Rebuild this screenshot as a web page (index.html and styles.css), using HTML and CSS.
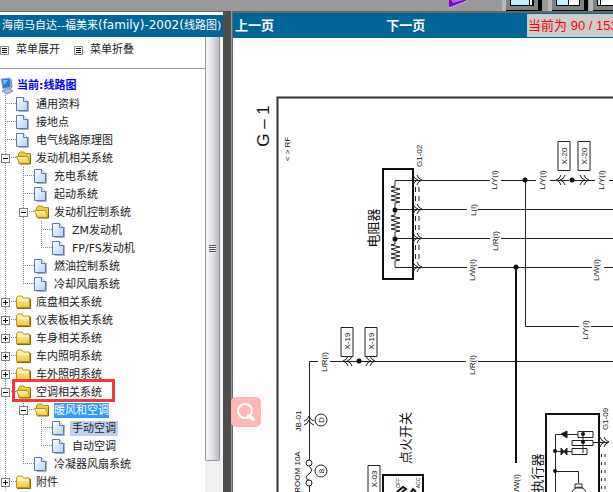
FILE: index.html
```html
<!DOCTYPE html>
<html lang="zh-CN">
<head>
    <meta charset="UTF-8">
    <meta name="viewport" content="width=device-width, initial-scale=1.0">
    <title>海南马自达--福美来(family)-2002(线路图)</title>
    <link rel="stylesheet" href="styles.css">
</head>
<body>
    <!-- shared icons -->
    <svg class="sprite" aria-hidden="true">
        <defs>
            <linearGradient id="paper" x1="0" y1="0" x2="1" y2="1">
                <stop offset="0" stop-color="#ffffff"/>
                <stop offset="1" stop-color="#b4d0fa"/>
            </linearGradient>
            <linearGradient id="gold" x1="0" y1="0" x2="0" y2="1">
                <stop offset="0" stop-color="#fff8b0"/>
                <stop offset="1" stop-color="#f0c840"/>
            </linearGradient>
        </defs>
        <symbol id="doc" viewBox="0 0 18 18">
            <path d="M3 3.500V16.500H12.500V6" fill="none" stroke="#b0b0b8"/>
            <path d="M.5 2.500H7.500L11.500 6.500V15.500H.5Z" fill="url(#paper)" stroke="#5878b8"/>
            <path d="M7.500 2.500V6.500H11.500" fill="#e8f0ff" stroke="#5878b8"/>
        </symbol>
        <symbol id="folder" viewBox="0 0 18 18">
            <path d="M.5 14.500V4.500L2 3H6L7.500 5H13.500V14.500Z" fill="url(#gold)" stroke="#b8941c"/>
            <path d="M1.500 7H13" stroke="#fffbd8"/>
            <path d="M1 15.500H14.500V6" fill="none" stroke="#806810"/>
        </symbol>
        <symbol id="folder-open" viewBox="0 0 18 18">
            <path d="M2.500 14V4.500L4 3H8L9.500 4.500H14.500V14Z" fill="#f0c840" stroke="#b8941c"/>
            <path d="M.5 7.500H11.500L14 14.500H3.500Z" fill="url(#gold)" stroke="#b8941c"/>
            <path d="M3.500 15H14.500V6" fill="none" stroke="#806810"/>
        </symbol>
        <symbol id="lines" viewBox="0 0 9 9">
            <path d="M.5.500H8.500V8.500H.5Z" fill="#fff" stroke="#888"/>
            <path d="M2 2.500H7M2 4.500H7M2 6.500H7" stroke="#000"/>
        </symbol>
    </svg>

    <header class="toolbar">
        <button class="tool play" aria-label="播放">
            <svg width="20" height="11"><path d="M1 0V7.500L18 1V0Z" fill="#7a08c4"/><path d="M3 0H16L5 3Z" fill="#b468f0"/><path d="M1 8L19 1" stroke="#eee" stroke-dasharray="1 1"/></svg>
        </button>
        <button class="tool" aria-label="宽左栏">
            <svg width="41" height="11"><path d="M0 0H4V11H0Z" fill="#b8b8b8"/><path d="M4 0H40V11H4Z" fill="#000"/><path d="M4 0H36V10H4Z" fill="#808080"/><path d="M8 0H32V6H8Z" fill="#000"/><path d="M9 0H27V5H9Z" fill="#c0f0ff"/><path d="M28 0H30V5H28Z" fill="#fff"/></svg>
        </button>
        <button class="tool" aria-label="平分">
            <svg width="41" height="11"><path d="M0 0H4V11H0Z" fill="#b8b8b8"/><path d="M4 0H40V11H4Z" fill="#000"/><path d="M4 0H36V10H4Z" fill="#808080"/><path d="M8 0H32V6H8Z" fill="#000"/><path d="M9 0H20V5H9Z" fill="#c0f0ff"/><path d="M21 0H31V5H21Z" fill="#fff"/></svg>
        </button>
        <button class="tool last" aria-label="窄左栏">
            <svg width="24" height="11"><path d="M0 0H4V11H0Z" fill="#b8b8b8"/><path d="M4 0H24V11H4Z" fill="#000"/><path d="M4 0H24V10H4Z" fill="#808080"/><path d="M8 0H24V6H8Z" fill="#000"/><path d="M9 0H11V5H9Z" fill="#c0f0ff"/><path d="M12 0H24V5H12Z" fill="#fff"/></svg>
        </button>
    </header>

    <main class="frames">
        <aside class="sidebar">
            <h1>海南马自达--福美来<span>(family)-2002(</span>线路图)</h1>
            <div class="sidebar-body">
                <nav class="menu">
                    <div class="menu-actions">
                        <button><svg width="9" height="9"><use href="#lines"/></svg>菜单展开</button>
                        <button><svg width="9" height="9"><use href="#lines"/></svg>菜单折叠</button>
                    </div>
                    <a class="root" href="#">
                        <svg width="14" height="18" viewBox="0 0 14 18"><path d="M2 14L9 11L13 14L7 17Z" fill="#b8bcd0" stroke="#8088a8"/><path d="M1 2L10 1L11 10L3 12Z" fill="#2478e0" stroke="#a0b0d0"/><path d="M3 3L8 3L4 8Z" fill="#78c8ff"/><path d="M11 2L12 10L10 12" fill="none" stroke="#7080a8"/></svg>当前:线路图
                    </a>
                    <ul class="tree">
                        <li><div class="row"><span class="joint"></span><svg class="icon"><use href="#doc"/></svg><a href="#">通用资料</a></div></li>
                        <li><div class="row"><span class="joint"></span><svg class="icon"><use href="#doc"/></svg><a href="#">接地点</a></div></li>
                        <li><div class="row"><span class="joint"></span><svg class="icon"><use href="#doc"/></svg><a href="#">电气线路原理图</a></div></li>
                        <li>
                            <div class="row"><span class="joint"><button class="toggle open" aria-label="折叠"></button></span><svg class="icon"><use href="#folder-open"/></svg><a href="#">发动机相关系统</a></div>
                            <ul>
                                <li><div class="row"><span class="joint"></span><svg class="icon"><use href="#doc"/></svg><a href="#">充电系统</a></div></li>
                                <li><div class="row"><span class="joint"></span><svg class="icon"><use href="#doc"/></svg><a href="#">起动系统</a></div></li>
                                <li>
                                    <div class="row"><span class="joint"><button class="toggle open" aria-label="折叠"></button></span><svg class="icon"><use href="#folder-open"/></svg><a href="#">发动机控制系统</a></div>
                                    <ul>
                                        <li><div class="row"><span class="joint"></span><svg class="icon"><use href="#doc"/></svg><a href="#">ZM发动机</a></div></li>
                                        <li><div class="row"><span class="joint"></span><svg class="icon"><use href="#doc"/></svg><a href="#">FP/FS发动机</a></div></li>
                                    </ul>
                                </li>
                                <li><div class="row"><span class="joint"></span><svg class="icon"><use href="#doc"/></svg><a href="#">燃油控制系统</a></div></li>
                                <li><div class="row"><span class="joint"></span><svg class="icon"><use href="#doc"/></svg><a href="#">冷却风扇系统</a></div></li>
                            </ul>
                        </li>
                        <li><div class="row"><span class="joint"><button class="toggle" aria-label="展开"></button></span><svg class="icon"><use href="#folder"/></svg><a href="#">底盘相关系统</a></div></li>
                        <li><div class="row"><span class="joint"><button class="toggle" aria-label="展开"></button></span><svg class="icon"><use href="#folder"/></svg><a href="#">仪表板相关系统</a></div></li>
                        <li><div class="row"><span class="joint"><button class="toggle" aria-label="展开"></button></span><svg class="icon"><use href="#folder"/></svg><a href="#">车身相关系统</a></div></li>
                        <li><div class="row"><span class="joint"><button class="toggle" aria-label="展开"></button></span><svg class="icon"><use href="#folder"/></svg><a href="#">车内照明系统</a></div></li>
                        <li><div class="row"><span class="joint"><button class="toggle" aria-label="展开"></button></span><svg class="icon"><use href="#folder"/></svg><a href="#">车外照明系统</a></div></li>
                        <li>
                            <div class="row marked"><span class="joint"><button class="toggle open" aria-label="折叠"></button></span><svg class="icon"><use href="#folder-open"/></svg><a href="#">空调相关系统</a></div>
                            <ul>
                                <li>
                                    <div class="row"><span class="joint"><button class="toggle open" aria-label="折叠"></button></span><svg class="icon"><use href="#folder-open"/></svg><a class="selected" href="#">暖风和空调</a></div>
                                    <ul>
                                        <li><div class="row"><span class="joint"></span><svg class="icon"><use href="#doc"/></svg><a class="current" href="#">手动空调</a></div></li>
                                        <li><div class="row"><span class="joint"></span><svg class="icon"><use href="#doc"/></svg><a href="#">自动空调</a></div></li>
                                    </ul>
                                </li>
                                <li><div class="row"><span class="joint"></span><svg class="icon"><use href="#doc"/></svg><a href="#">冷凝器风扇系统</a></div></li>
                            </ul>
                        </li>
                        <li class="more"><div class="row"><span class="joint"><button class="toggle" aria-label="展开"></button></span><svg class="icon"><use href="#folder"/></svg><a href="#">附件</a></div></li>
                    </ul>
                </nav>
                <div class="scrollbar"><div class="thumb"><span class="grip"></span></div></div>
            </div>
        </aside>

        <div class="splitter"></div>

        <section class="viewer">
            <div class="pager">
                <a href="#">上一页</a>
                <a href="#">下一页</a>
                <span class="status">当前为 90 / 153</span>
            </div>
            <div class="sheet">
                <svg class="diagram" width="380" height="454" viewBox="233 38 380 454">
                    <defs>
                        <path id="right" d="M-4-5Q-3-1 1 0Q-3 1-4 5M0-5Q1-1 5 0Q1 1 0 5"/>
                        <path id="zigzag" d="M0-14V-9L-4-8L5-6L-4-4L5-1L-4 1L5 3L-4 5L5 7L0 8V14"/>
                    </defs>

                    <!-- wires -->
                    <g class="wire">
                        <path d="M277.500 492V97.500H613" class="frame"/>
                        <path d="M395 180.500H490M501 180.500H536M550 180.500H569M572 180.500H595M609 180.500H613"/>
                        <path d="M395 209.500H467M478 209.500H613"/>
                        <path d="M395 238.500H490M501 238.500H613"/>
                        <path d="M395 267.500H467M478 267.500H592M604 267.500H613"/>
                        <path d="M525.500 180V326.500H579M591 326.500H613"/>
                        <path d="M309.500 460V361.500H318M330 361.500H466M478 361.500H613"/>
                        <path d="M516 267V463" class="bold"/>
                    </g>

                    <!-- resistor block -->
                    <g class="wire">
                        <path d="M383 169H413V279H383Z" class="bold"/>
                        <use href="#zigzag" x="395" y="195"/>
                        <use href="#zigzag" x="395" y="224"/>
                        <use href="#zigzag" x="395" y="253"/>
                        <use href="#right" x="417" y="180"/>
                        <use href="#right" x="417" y="209"/>
                        <use href="#right" x="417" y="238"/>
                        <use href="#right" x="417" y="267"/>
                        <path d="M415.500 187V263M419 187V263" stroke-dasharray="5 4 5 15"/>
                    </g>

                    <!-- connectors -->
                    <g class="wire">
                        <path d="M558 141.500H570V170.500H558ZM578 141.500H590V170.500H578Z"/>
                        <path d="M341 327.500H353V356.500H341ZM365 327.500H377V356.500H365Z"/>
                        <use href="#right" transform="translate(561 180) scale(-1 1)"/>
                        <use href="#right" x="584" y="180"/>
                        <use href="#right" transform="translate(348 361) scale(-1 1)"/>
                        <use href="#right" x="370" y="361"/>
                        <use href="#right" transform="translate(309 421) rotate(-90)"/>
                        <circle cx="321" cy="420" r="6"/>
                        <circle cx="321" cy="471" r="6"/>
                        <circle cx="309" cy="463" r="3"/>
                        <circle cx="309" cy="483" r="3"/>
                        <path d="M309 466Q314 470 309 474Q303 478 309 480M309.500 486V492"/>
                    </g>

                    <!-- ignition switch -->
                    <g class="wire">
                        <path d="M368 492V465.500H380V492"/>
                        <path d="M383 492V475H423V492" class="bold"/>
                        <path d="M397 492L403 487L406 489L402 492M411 492L413 489L416 492" class="bold"/>
                    </g>

                    <!-- actuator -->
                    <g class="wire">
                        <path d="M546 492V414H599V492" class="bold"/>
                        <path d="M578 434.500H555.500V492M572 451.500H555M555 471.500H578.500V483"/>
                        <path d="M578 431.500H593V437.500H578ZM572 440.500H593V445.500H572ZM572 448.500H587V454.500H572ZM593 442.500H608M583 433V453"/>
                        <path d="M561 434L567 431V438ZM561 448V455L567 448V455Z" fill="#111"/>
                        <path d="M575 484H582V488H575Z"/>
                        <circle cx="579" cy="494" r="7"/>
                        <use href="#right" x="604" y="442"/>
                        <path d="M601.500 454V492M605 454V492" stroke-dasharray="3 5"/>
                    </g>

                    <g class="node">
                        <circle cx="395" cy="210" r="2.500"/>
                        <circle cx="395" cy="239" r="2.500"/>
                        <circle cx="525" cy="180" r="2.500"/>
                        <circle cx="516" cy="267" r="2.500"/>
                        <circle cx="572" cy="180" r="2.500"/>
                        <circle cx="359" cy="361" r="2.500"/>
                        <circle cx="555" cy="451" r="2"/>
                        <circle cx="555" cy="471" r="2"/>
                        <circle cx="583" cy="434" r="2"/>
                        <circle cx="583" cy="442" r="2"/>
                    </g>

                    <g class="label">
                        <text class="sheet-no" transform="translate(269 126) rotate(-90)">G – 1</text>
                        <text transform="translate(290 149) rotate(-90)">&lt; &gt; RF</text>
                        <text transform="translate(422 156) rotate(-90)">G1-02</text>
                        <text transform="translate(497 180) rotate(-90)">L/Y(I)</text>
                        <text transform="translate(545 180) rotate(-90)">L/Y(I)</text>
                        <text transform="translate(604 180) rotate(-90)">L/Y(I)</text>
                        <text transform="translate(476 210) rotate(-90)">L(I)</text>
                        <text transform="translate(498 241) rotate(-90)">L/R(I)</text>
                        <text transform="translate(475 270) rotate(-90)">L/W(I)</text>
                        <text transform="translate(599 270) rotate(-90)">L/W(I)</text>
                        <text transform="translate(588 330) rotate(-90)">L/Y(I)</text>
                        <text transform="translate(327 362) rotate(-90)">L/R(I)</text>
                        <text transform="translate(475 365) rotate(-90)">L/R(I)</text>
                        <text transform="translate(567 156) rotate(-90)">X-20</text>
                        <text transform="translate(587 156) rotate(-90)">X-20</text>
                        <text transform="translate(350 341) rotate(-90)">X-19</text>
                        <text transform="translate(374 341) rotate(-90)">X-19</text>
                        <text transform="translate(301 421) rotate(-90)">JB-01</text>
                        <text transform="translate(324 420) rotate(-90)">D</text>
                        <text transform="translate(324 471) rotate(-90)">8</text>
                        <text transform="translate(300 472) rotate(-90)">ROOM 10A</text>
                        <text transform="translate(377 479) rotate(-90)">X-03</text>
                        <text transform="translate(608 419) rotate(-90)">G1-09</text>
                        <text transform="translate(519 485) rotate(-90)">L/W(I)</text>
                        <text class="tiny" transform="translate(400 483) rotate(-90)">OFF</text>
                        <text class="tiny" transform="translate(420 483) rotate(-90)">ACC</text>
                        <text class="part" transform="translate(378 228) rotate(-90)">电阻器</text>
                        <text class="part" transform="translate(410 438) rotate(-90)">点火开关</text>
                        <text class="part" transform="translate(542 473) rotate(-90)">执行器</text>
                    </g>
                </svg>
            </div>
            <button class="zoom" aria-label="放大">
                <svg width="20" height="20" viewBox="0 0 20 20"><circle cx="9" cy="9" r="7" fill="none" stroke="#fff" stroke-width="2"/><path d="M13 14L17 17" stroke="#fff" stroke-width="4" stroke-linecap="round"/></svg>
            </button>
        </section>
    </main>
</body>
</html>
```
FILE: styles.css
```css
*, *::after { box-sizing: border-box; margin: 0; padding: 0; }

body {
    display: flex;
    flex-direction: column;
    height: 100vh;
    overflow: hidden;
    background: #999;
    color: #222;
    font: 11px/18px "DejaVu Sans", "Noto Sans CJK SC", sans-serif;
}

a { color: inherit; text-decoration: none; }
button { border: none; background: none; color: inherit; font: inherit; cursor: pointer; }
svg { display: block; flex: none; }

.sprite { position: absolute; width: 0; height: 0; }

/* top toolbar */
.toolbar {
    display: flex;
    flex: none;
    justify-content: flex-end;
    height: 11px;
    gap: 5px;
}

.tool { height: 11px; }
.play { margin-right: 29px; }
.last { margin-left: -5px; }

.frames {
    display: flex;
    flex: 1;
    min-height: 0;
}

/* left frame */
.sidebar {
    display: flex;
    flex-direction: column;
    flex: none;
    width: 223px;
    padding-top: 3px;
    border-top: 1px solid #666;
    background: #fff;
}

.sidebar h1 {
    flex: none;
    height: 22px;
    padding-left: 2px;
    overflow: hidden;
    background: #069;
    color: #fff;
    font-size: 11px;
    font-weight: normal;
    line-height: 20px;
    white-space: nowrap;
}

.sidebar h1 span { font-size: 12px; }

.sidebar-body {
    display: flex;
    flex: 1;
    min-height: 0;
}

.menu {
    flex: 1;
    overflow: hidden;
}

.menu-actions {
    display: flex;
    gap: 14px;
    height: 32px;
    margin-bottom: 8px;
    padding-top: 4px;
    border-bottom: 1px solid #999;
}

.menu-actions button {
    display: flex;
    align-items: center;
    gap: 7px;
    height: 18px;
}

.root {
    display: flex;
    align-items: center;
    gap: 3px;
    height: 18px;
    color: #00f;
    font-weight: bold;
}

/* tree */
.tree ul { margin-left: 18px; }

.tree li {
    list-style: none;
    background: repeating-linear-gradient(#888 0 1px, transparent 1px 2px) 5px 0 / 1px 100% no-repeat;
}

.tree li:last-child { background-size: 1px 9px; }
.tree li.more { background-size: 1px 100%; }

.row {
    position: relative;
    display: flex;
    align-items: center;
    height: 18px;
}

.joint {
    display: flex;
    align-items: center;
    width: 16px;
    height: 18px;
    padding-left: 1px;
    background: repeating-linear-gradient(90deg, #888 0 1px, transparent 1px 2px) 5px 8px / 11px 1px no-repeat;
}

.icon {
    width: 18px;
    height: 18px;
    margin-right: 2px;
}

.row a { line-height: 15px; }

.toggle {
    width: 9px;
    height: 9px;
    border: 1px solid #808080;
    background:
        linear-gradient(#000, #000) center / 5px 1px no-repeat,
        linear-gradient(#000, #000) center / 1px 5px no-repeat,
        #fff;
}

.toggle.open { background: linear-gradient(#000, #000) center / 5px 1px no-repeat, #fff; }

.row .selected { background: #39f; color: #fff; }

.row .current {
    margin-left: -2px;
    padding: 0 2px;
    background: #c1d2ee;
}

.marked::after {
    content: "";
    position: absolute;
    top: -4px;
    left: 12px;
    z-index: 1;
    width: 103px;
    height: 23px;
    border: 3px solid #f83838;
    pointer-events: none;
}

.scrollbar {
    flex: none;
    width: 18px;
    padding-bottom: 31px;
    background: #f0f0f0;
}

.thumb {
    display: flex;
    align-items: center;
    justify-content: center;
    width: 15px;
    height: 100%;
    border: 1px solid #999;
    border-top: none;
    border-radius: 0 0 2px 2px;
    background: linear-gradient(90deg, #f6f6f6, #e4e4e8 45%, #b8b8c0);
}

.grip {
    width: 7px;
    height: 8px;
    background: repeating-linear-gradient(#555 0 1px, #eee 1px 2px);
}

.splitter {
    flex: none;
    width: 8px;
    background: #4d4d4d;
}

/* right frame */
.viewer {
    position: relative;
    display: flex;
    flex: 1;
    flex-direction: column;
    min-width: 0;
    margin-left: 1px;
    border-top: 2px solid #666;
    border-left: 1px solid #666;
    background: #fff;
}

.pager {
    display: grid;
    flex: none;
    grid-template-columns: 40% 37% minmax(0, 1fr);
    height: 25px;
    padding: 1px 0 1px 2px;
    background: #069;
    color: #fff;
    font-size: 13px;
    font-weight: bold;
    line-height: 23px;
}

.status {
    margin-left: 1px;
    padding-left: 1px;
    overflow: hidden;
    background: #ccc;
    color: #f00;
    font-family: "Liberation Sans", "Noto Sans CJK SC", sans-serif;
    font-weight: normal;
    white-space: nowrap;
}

.sheet {
    flex: 1;
    min-height: 0;
    overflow: hidden;
}

.wire {
    fill: none;
    stroke: #222;
    stroke-width: 1;
}

.wire .frame { stroke: #333; stroke-width: 2; }
.wire .bold { stroke: #111; stroke-width: 2; }
.node { fill: #111; }

.label {
    fill: #111;
    font-family: "Liberation Sans", "Noto Sans CJK SC", sans-serif;
    font-size: 8px;
    text-anchor: middle;
}

.label .sheet-no { font-size: 17px; }
.label .part { font-size: 13px; }
.label .tiny { font-size: 5px; }

/* floating search button */
.zoom {
    position: absolute;
    bottom: 65px;
    left: -2px;
    display: flex;
    align-items: center;
    justify-content: center;
    width: 30px;
    height: 30px;
    border-radius: 5px;
    background: #ffb8b8;
}
```
